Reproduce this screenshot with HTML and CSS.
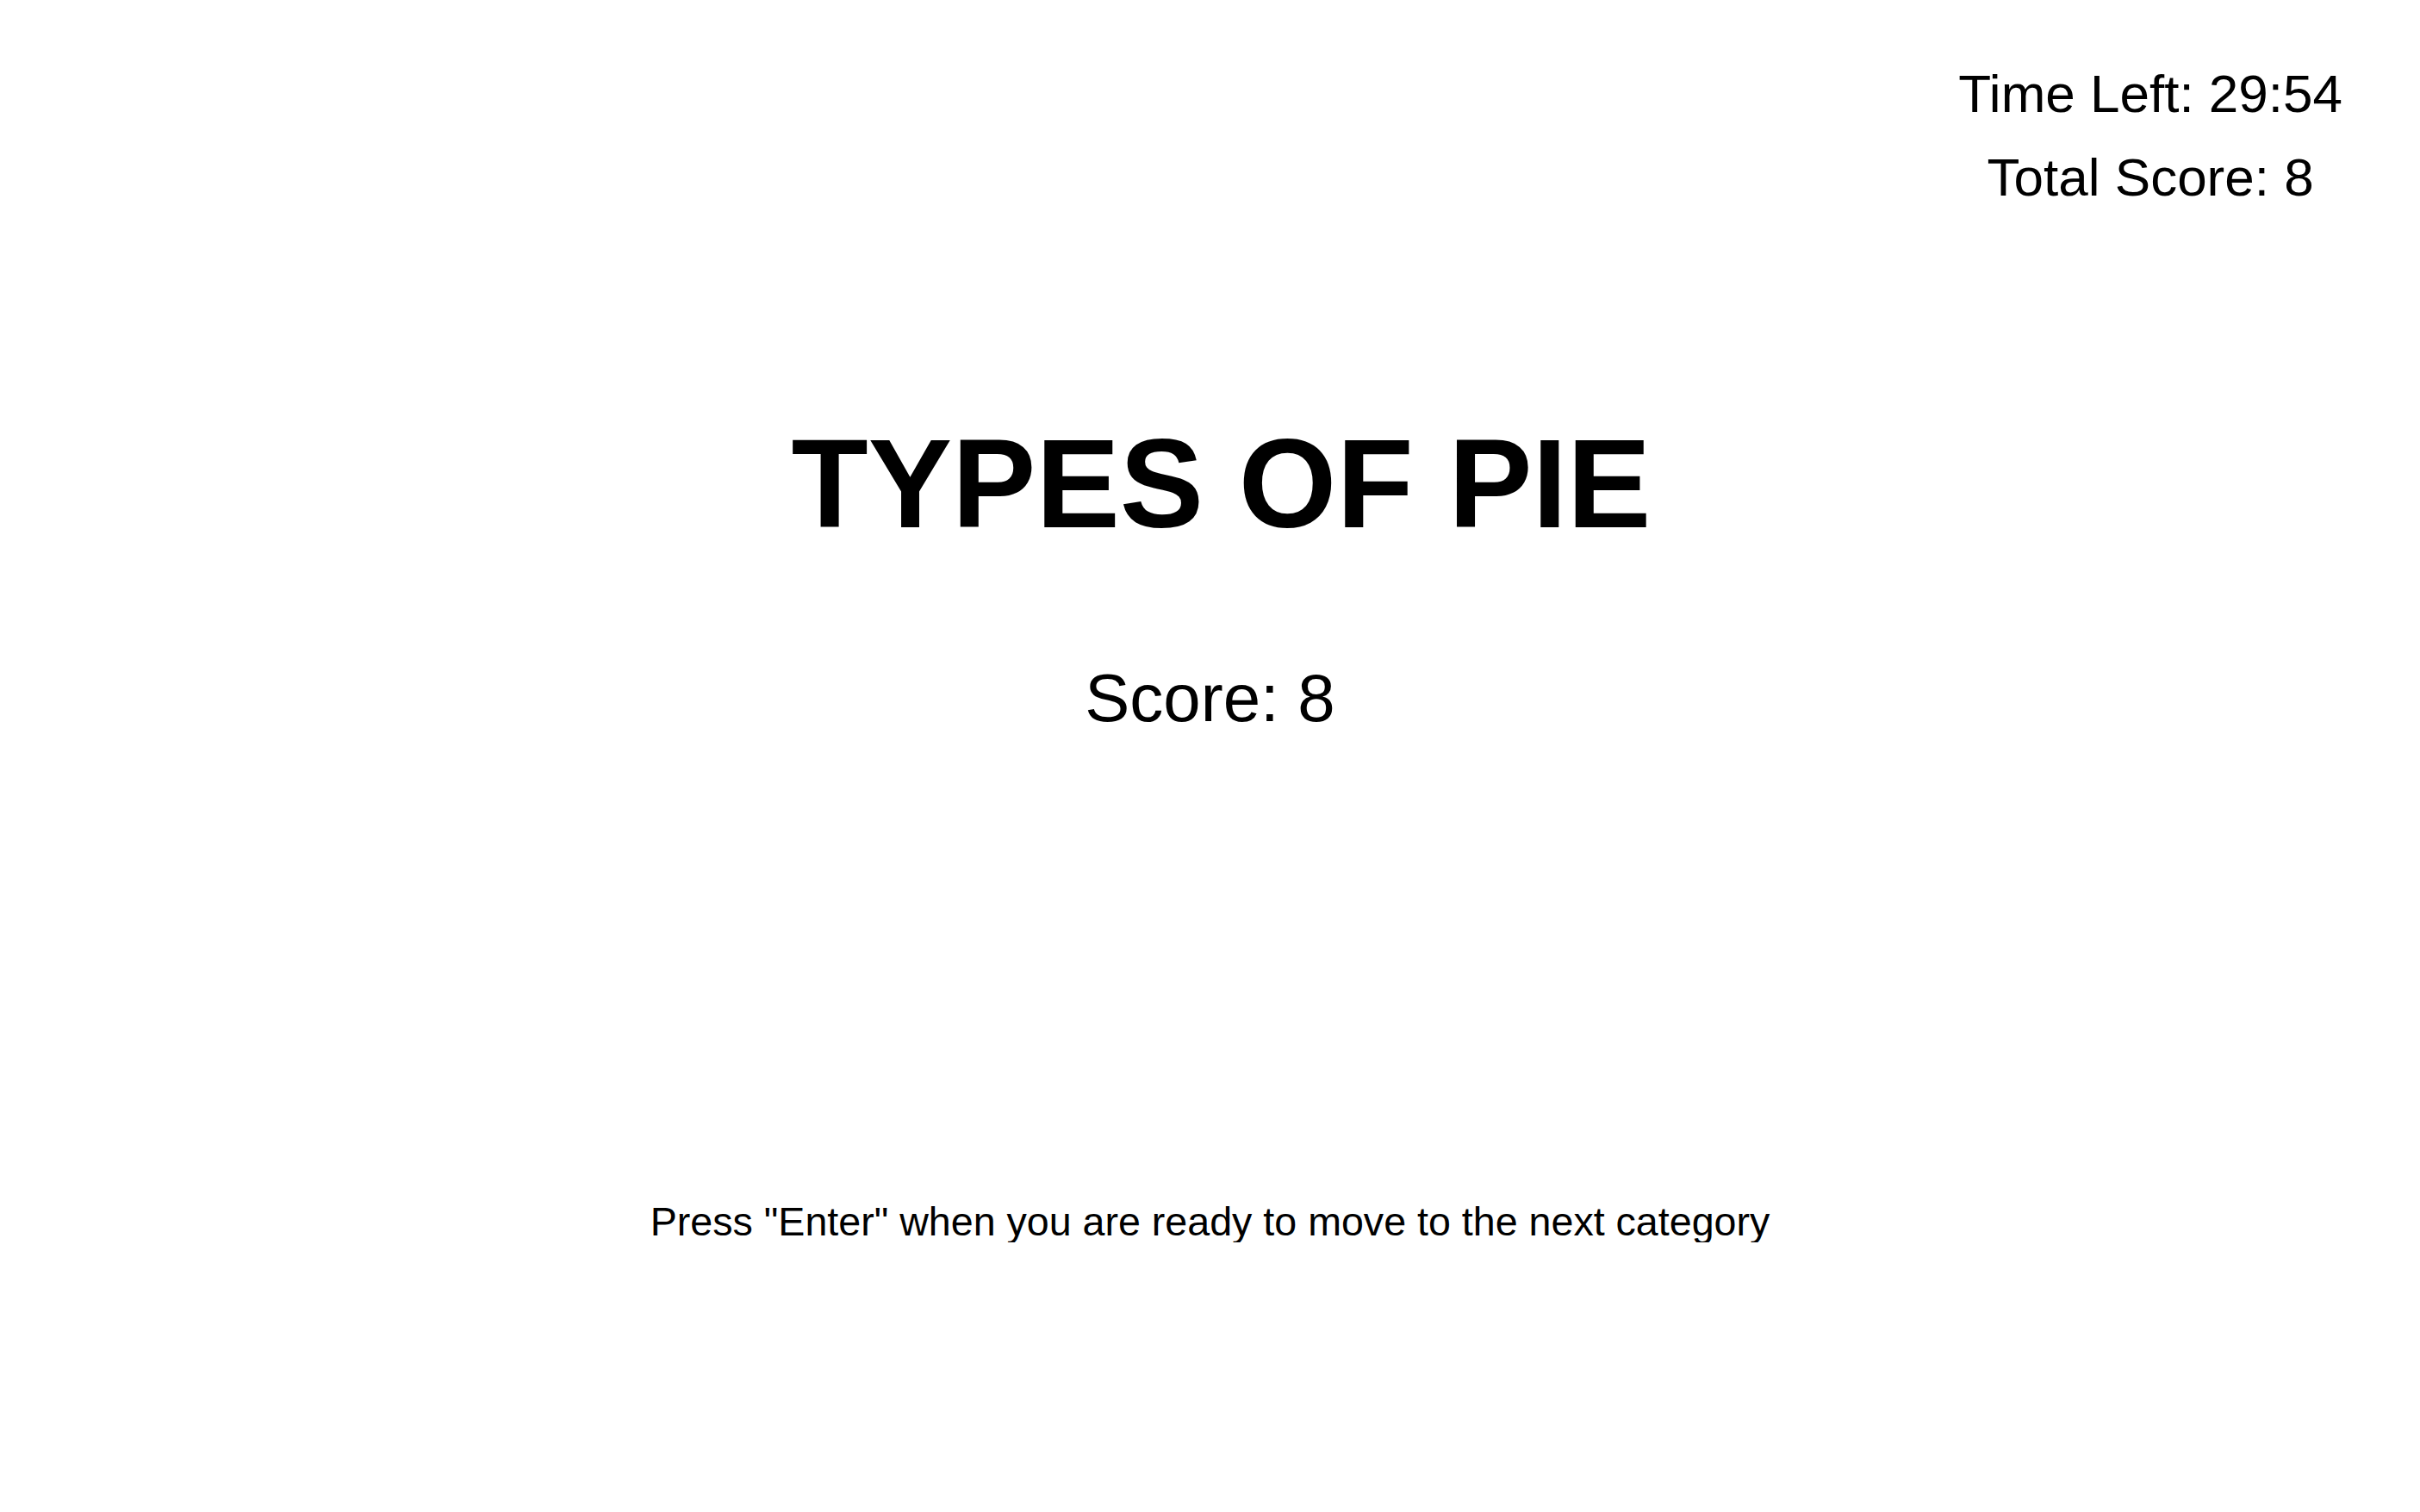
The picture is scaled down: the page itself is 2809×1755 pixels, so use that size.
FILE: index.html
```html
<!DOCTYPE html>
<html lang="en">
<head>
<meta charset="utf-8">
<title>Types of Pie</title>
<link rel="stylesheet" href="styles.css">
</head>
<body>
  <header class="topbar">
    <div class="stats">
      <div class="stat">Time Left: 29:54</div>
      <div class="stat">Total Score: 8</div>
    </div>
  </header>
  <main class="content">
    <h1 class="category">TYPES OF PIE</h1>
    <div class="score">Score: 8</div>
    <p class="hint">Press "Enter" when you are ready to move to the next category</p>
  </main>
</body>
</html>
```

FILE: styles.css
```css
html, body {
  margin: 0;
  padding: 0;
  background: #ffffff;
  color: #000000;
  font-family: "Liberation Sans", Arial, Helvetica, sans-serif;
}

.topbar {
  display: flex;
  justify-content: flex-end;
  padding: 60px 90px 0 0;
}

.stats {
  text-align: center;
  font-size: 62px;
  line-height: 97px;
}

.content {
  display: flex;
  flex-direction: column;
  align-items: center;
}

.category {
  margin: 235px 0 0 0;
  padding-left: 26px;
  font-size: 146px;
  line-height: 1;
  font-weight: 700;
}

.score {
  margin-top: 136px;
  font-size: 78px;
  line-height: 1;
}

.hint {
  margin: 546px 0 0 0;
  font-size: 46.6px;
  line-height: 1;
}
```
